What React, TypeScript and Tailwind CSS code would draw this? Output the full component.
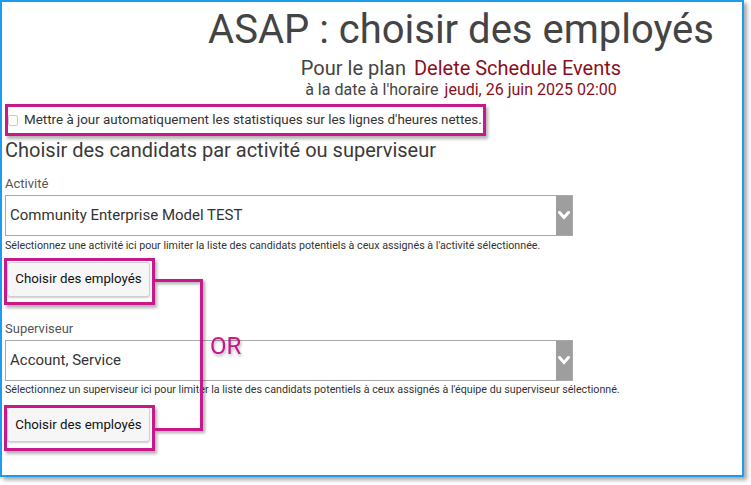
import React from "react";

const PINK = "border-[#c8188a]";

function Chevron() {
  return (
    <svg width="12" height="9" viewBox="0 0 12 9" className="block">
      <polyline points="1.5,1.5 6,6.5 10.5,1.5" fill="none" stroke="#ffffff" strokeWidth="3" strokeLinecap="square" />
    </svg>
  );
}

function Select({ value }: { value: string }) {
  return (
    <div className="flex w-[568px] h-[41px] border border-[#a9a9a9] bg-white">
      <div className="flex-1 flex items-center pl-[4px] text-[15px] text-[#333]">{value}</div>
      <div className="w-[16px] bg-[#9e9e9e] flex items-center justify-center">
        <Chevron />
      </div>
    </div>
  );
}

function Button() {
  return (
    <div className="ml-[2px] w-[143px] h-[35px] flex items-center justify-center rounded-[3px] border border-[#cfcfcf] bg-[#f6f6f6] shadow-[0_1px_2px_rgba(0,0,0,0.2)] text-[13.3px] text-[#111]">
      Choisir des employés
    </div>
  );
}

export default function App() {
  return (
    <div
      className="relative w-[751px] h-[485px] bg-white"
      style={{ fontFamily: "Roboto, 'Noto Sans', sans-serif" }}
    >
      <div className="w-[744px] h-[477px] border-2 border-[#1b9cf0] bg-white shadow-[3px_3px_4px_rgba(0,0,0,0.35)] overflow-hidden">
        <div className="pl-[178px] text-center text-[#444]">
          <div className="pt-[6px] text-[40px] leading-[44px]">ASAP : choisir des employés</div>
          <div className="mt-[4px] text-[20px] leading-[24px]">
            Pour le plan <span className="ml-[3px] text-[#8a1020]">Delete Schedule Events</span>
          </div>
          <div className="text-[16px] leading-[20px]">
            à la date à l'horaire <span className="ml-[2px] text-[#8a1020]">jeudi, 26 juin 2025 02:00</span>
          </div>
        </div>

        <div className="pl-[3px]">
          <div className="mt-[10px] h-[20px] flex items-center text-[13.4px] text-[#333]">
            <span className="ml-[3px] mr-[6px] w-[10px] h-[11px] rounded-[2px] border border-[#c8c8c8] bg-white" />
            Mettre à jour automatiquement les statistiques sur les lignes d'heures nettes.
          </div>

          <div className="mt-[8px] text-[20px] leading-[24px] text-[#3a3a3a]">
            Choisir des candidats par activité ou superviseur
          </div>

          <div className="mt-[14px] text-[13px] leading-[16px] text-[#555]">Activité</div>
          <div className="mt-[3px]">
            <Select value="Community Enterprise Model TEST" />
          </div>
          <div className="mt-[2.5px] text-[10.7px] leading-[14px] text-[#333]">
            Sélectionnez une activité ici pour limiter la liste des candidats potentiels à ceux assignés à l'activité sélectionnée.
          </div>
          <div className="mt-[9px]">
            <Button />
          </div>

          <div className="mt-[24px] text-[13px] leading-[16px] text-[#555]">Superviseur</div>
          <div className="mt-[3px]">
            <Select value="Account, Service" />
          </div>
          <div className="mt-[2.5px] text-[10.7px] leading-[14px] text-[#333]">
            Sélectionnez un superviseur ici pour limiter la liste des candidats potentiels à ceux assignés à l'équipe du superviseur sélectionné.
          </div>
          <div className="mt-[10px]">
            <Button />
          </div>
        </div>
      </div>

      {/* annotations */}
      <div className={`absolute left-[5px] top-[104px] w-[481px] h-[32px] border-[3px] ${PINK} shadow-[2px_3px_3px_rgba(0,0,0,0.3)]`} />
      <div className={`absolute left-[4px] top-[258px] w-[151px] h-[47px] border-[3px] ${PINK} shadow-[2px_3px_3px_rgba(0,0,0,0.3)]`} />
      <div className={`absolute left-[4px] top-[405px] w-[151px] h-[46px] border-[3px] ${PINK} shadow-[2px_3px_3px_rgba(0,0,0,0.3)]`} />
      <div className={`absolute left-[155px] top-[279px] w-[48px] h-[152px] border-t-[3px] border-r-[3px] border-b-[3px] ${PINK} drop-shadow-[2px_2px_1.5px_rgba(0,0,0,0.35)]`} />
      <div className="absolute left-[210px] top-[332px] text-[24px] leading-[28px] text-[#c8188a] drop-shadow-[1px_2px_1.5px_rgba(0,0,0,0.3)]">
        OR
      </div>
    </div>
  );
}
